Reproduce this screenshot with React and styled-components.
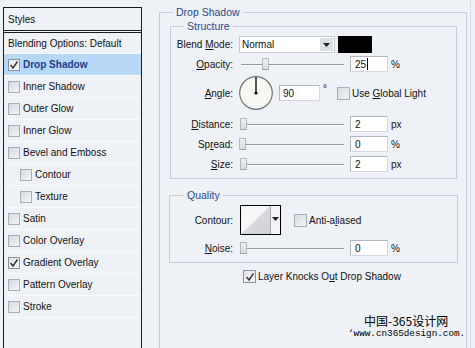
import React from 'react';
import styled, { createGlobalStyle } from 'styled-components';

const Global = createGlobalStyle`
  html, body { margin: 0; padding: 0; background: #eef1f5; }
  body { font-family: "Liberation Sans", Arial, sans-serif; font-size: 10px; color: #111; }
  u { text-decoration-thickness: 1px; text-underline-offset: 1px; }
`;

const Window = styled.div`
  position: relative;
  width: 475px;
  height: 348px;
  overflow: hidden;
  background: #eef1f5;
  display: flex;
  align-items: flex-start;
`;

/* ---------- left styles list ---------- */
const StylesPanel = styled.div`
  flex: none;
  margin: 7px 0 0 3px;
  width: 139px;
  height: 360px;
  box-sizing: border-box;
  border: 1px solid #1b1b1b;
  border-bottom: none;
  background: #eef2f6;
`;

const PanelHeader = styled.div`
  height: 22px;
  display: flex;
  align-items: center;
  padding-left: 4px;
  border-bottom: 3px double #1b1b1b;
`;

const BlendRow = styled.div`
  height: 20px;
  display: flex;
  align-items: center;
  padding-left: 4px;
  border-bottom: 1px solid #fafbfc;
`;

const StyleRow = styled.div`
  height: 21px;
  display: flex;
  align-items: center;
  padding-left: ${p => (p.$indent ? 16 : 4)}px;
  border-bottom: 1px solid #fafbfc;
  background: ${p => (p.$active ? '#b5d8f7' : 'transparent')};
  color: ${p => (p.$active ? '#1c3d8e' : '#111')};
  font-weight: ${p => (p.$active ? 700 : 400)};
`;

const RowText = styled.span`
  margin-left: 3px;
  white-space: nowrap;
`;

/* ---------- checkbox ---------- */
const Box = styled.span`
  flex: none;
  width: ${p => p.$size || 12}px;
  height: ${p => p.$size || 12}px;
  box-sizing: border-box;
  border: 1px solid ${p => (p.$checked ? '#8a9198' : '#a7adb3')};
  background: ${p =>
    p.$checked
      ? 'linear-gradient(135deg, #e4e7ea, #f7f8f9)'
      : 'linear-gradient(135deg, #d6dadf, #f3f5f7)'};
  display: inline-flex;
  align-items: center;
  justify-content: center;
`;

const Check = ({ checked, size }) => (
  <Box $checked={checked} $size={size}>
    {checked && (
      <svg width="10" height="10" viewBox="0 0 10 10">
        <polyline points="1.5,5 4,8 8.5,1.5" fill="none" stroke="#333" strokeWidth="1.4" />
      </svg>
    )}
  </Box>
);

/* ---------- right side groups ---------- */
const Outer = styled.fieldset`
  flex: none;
  margin: 6px 0 0 17px;
  padding: 0 9px 0 10px;
  width: 308px;
  height: 380px;
  box-sizing: border-box;
  border: 1px solid #c6ccd2;
  min-inline-size: 0;
`;

const Group = styled.fieldset`
  margin: ${p => p.$margin || '0'};
  padding: 0 0 ${p => p.$pb}px 0;
  border: 1px solid #c6ccd2;
  min-inline-size: 0;
`;

const Legend = styled.legend`
  margin-left: ${p => p.$ml}px;
  padding: 0 3px;
  font-size: 10.5px;
  line-height: 12px;
  color: #2a4b8d;
`;

const Row = styled.div`
  display: flex;
  align-items: center;
  height: ${p => p.$h}px;
  margin-top: ${p => p.$mt}px;
  margin-left: ${p => p.$ml || 0}px;
`;

const Label = styled.span`
  flex: none;
  width: ${p => p.$w || 62}px;
  margin-right: 6px;
  text-align: right;
  white-space: nowrap;
`;

const Select = styled.div`
  flex: none;
  width: 96px;
  height: 17px;
  box-sizing: border-box;
  border: 1px solid #c4c9ce;
  background: #fff;
  display: flex;
  align-items: center;
  padding-left: 2px;
`;

const SelectBtn = styled.span`
  margin-left: auto;
  width: 13px;
  height: 13px;
  margin-right: 1px;
  background: #dcdfe3;
  display: flex;
  align-items: center;
  justify-content: center;
`;

const Swatch = styled.div`
  flex: none;
  width: 34px;
  height: 17px;
  margin-left: 3px;
  background: #000;
`;

const Slider = styled.div`
  flex: none;
  position: relative;
  width: 104px;
  height: 14px;
  margin-left: 1px;
  &::before {
    content: '';
    position: absolute;
    left: 1px;
    right: 0;
    top: 7px;
    height: 1px;
    background: #8f959b;
    box-shadow: 0 1px 0 #fff;
  }
`;

const Thumb = styled.span`
  position: absolute;
  top: 1px;
  left: ${p => p.$pos}px;
  width: 7px;
  height: 12px;
  box-sizing: border-box;
  border: 1px solid #b4b9be;
  border-bottom-color: #9ea4aa;
  background: linear-gradient(#eef0f2, #dadde1);
`;

const Field = styled.div`
  flex: none;
  width: ${p => p.$w || 38}px;
  height: 16px;
  margin-left: ${p => p.$ml ?? 6}px;
  box-sizing: border-box;
  background: #fff;
  border: 1px solid #d3d7db;
  border-top-color: #b3b8bd;
  border-left-color: #b3b8bd;
  display: flex;
  align-items: center;
  padding-left: ${p => p.$pl ?? 4}px;
`;

const Caret = styled.span`
  display: inline-block;
  width: 1px;
  height: 12px;
  background: #000;
  margin-left: 1px;
`;

const Unit = styled.span`
  margin-left: 3px;
`;

const Degree = styled.span`
  flex: none;
  width: 17px;
  box-sizing: border-box;
  padding-left: 3px;
  align-self: flex-start;
  margin-top: 7px;
`;

const CheckText = styled.span`
  margin-left: 2px;
  white-space: nowrap;
`;

const ContourBox = styled.div`
  flex: none;
  margin-left: 1px;
  width: 41px;
  height: 30px;
  box-sizing: border-box;
  border: 1px solid #000;
  display: flex;
  background: #fff;
`;

const ContourDrop = styled.div`
  width: 10px;
  border-left: 1px solid #a8adb2;
  background: #f3f4f6;
  display: flex;
  justify-content: center;
  padding-top: 11px;
  box-sizing: border-box;
`;

const Edge = styled.div`
  flex: none;
  margin-left: 3px;
  width: 1px;
  height: 348px;
  background: #d8dce1;
`;

const Watermark = styled.div`
  position: absolute;
  left: 348px;
  top: 313px;
  color: #000;
`;

const WmCn = styled.div`
  padding-left: 16px;
  font-family: "Noto Sans CJK SC", sans-serif;
  font-size: 12px;
  line-height: 15px;
`;

const WmUrl = styled.div`
  font-family: "Liberation Mono", monospace;
  font-size: 9.3px;
  line-height: 11px;
  white-space: nowrap;
`;

const Arrow = () => (
  <svg width="7" height="4" viewBox="0 0 7 4">
    <polygon points="0,0 7,0 3.5,4" fill="#222" />
  </svg>
);

const Dial = () => (
  <svg width="34" height="34" viewBox="0 0 34 34" style={{ flex: 'none' }}>
    <circle cx="17" cy="17" r="16.3" fill="#f7f7f1" stroke="#6f757a" strokeWidth="1.2" />
    <line x1="17" y1="17" x2="17" y2="1" stroke="#000" strokeWidth="1.3" />
    <circle cx="17" cy="17" r="1.6" fill="#000" />
  </svg>
);

const styleItems = [
  { name: 'Drop Shadow', checked: true, active: true },
  { name: 'Inner Shadow' },
  { name: 'Outer Glow' },
  { name: 'Inner Glow' },
  { name: 'Bevel and Emboss' },
  { name: 'Contour', indent: true },
  { name: 'Texture', indent: true },
  { name: 'Satin' },
  { name: 'Color Overlay' },
  { name: 'Gradient Overlay', checked: true },
  { name: 'Pattern Overlay' },
  { name: 'Stroke' },
];

export default function App() {
  return (
    <Window>
      <Global />
      <StylesPanel>
        <PanelHeader>Styles</PanelHeader>
        <BlendRow>Blending Options: Default</BlendRow>
        {styleItems.map(it => (
          <StyleRow key={it.name} $indent={it.indent} $active={it.active}>
            <Check checked={it.checked} />
            <RowText>{it.name}</RowText>
          </StyleRow>
        ))}
      </StylesPanel>

      <Outer>
        <Legend $ml={3}>Drop Shadow</Legend>
        <Group $margin="2px 0 0 0" $pb={6}>
          <Legend $ml={13}>Structure</Legend>
          <Row $h={17} $mt={4}>
            <Label>Blend <u>M</u>ode:</Label>
            <Select>
              Normal
              <SelectBtn><Arrow /></SelectBtn>
            </Select>
            <Swatch />
          </Row>
          <Row $h={16} $mt={3}>
            <Label><u>O</u>pacity:</Label>
            <Slider><Thumb $pos={22} /></Slider>
            <Field>25<Caret /></Field>
            <Unit>%</Unit>
          </Row>
          <Row $h={34} $mt={4}>
            <Label><u>A</u>ngle:</Label>
            <Dial />
            <Field $w={41} $pl={3}>90</Field>
            <Degree>°</Degree>
            <Check size={13} />
            <CheckText>Use <u>G</u>lobal Light</CheckText>
          </Row>
          <Row $h={16} $mt={6}>
            <Label><u>D</u>istance:</Label>
            <Slider><Thumb $pos={0} /></Slider>
            <Field>2</Field>
            <Unit>px</Unit>
          </Row>
          <Row $h={16} $mt={4}>
            <Label>Sp<u>r</u>ead:</Label>
            <Slider><Thumb $pos={-1} /></Slider>
            <Field>0</Field>
            <Unit>%</Unit>
          </Row>
          <Row $h={16} $mt={4}>
            <Label><u>S</u>ize:</Label>
            <Slider><Thumb $pos={0} /></Slider>
            <Field>2</Field>
            <Unit>px</Unit>
          </Row>
        </Group>

        <Group $margin="10px -1px 0 -1px" $pb={6}>
          <Legend $ml={14}>Quality</Legend>
          <Row $h={30} $mt={4}>
            <Label $w={63}>Contour:</Label>
            <ContourBox>
              <svg width="29" height="28" viewBox="0 0 29 28" style={{ display: 'block' }}>
                <defs>
                  <linearGradient id="cg" x1="0" y1="0" x2="1" y2="1">
                    <stop offset="0" stopColor="#e2e3e6" />
                    <stop offset="1" stopColor="#cfd1d5" />
                  </linearGradient>
                </defs>
                <rect width="29" height="28" fill="#f6f7f8" />
                <polygon points="0,28 29,0 29,28" fill="url(#cg)" />
              </svg>
              <ContourDrop><Arrow /></ContourDrop>
            </ContourBox>
            <Row $h={13} $mt={0} $ml={13}>
              <Check size={13} />
              <CheckText>Anti-a<u>l</u>iased</CheckText>
            </Row>
          </Row>
          <Row $h={16} $mt={5}>
            <Label $w={63}><u>N</u>oise:</Label>
            <Slider><Thumb $pos={0} /></Slider>
            <Field>0</Field>
            <Unit>%</Unit>
          </Row>
        </Group>

        <Row $h={13} $mt={7} $ml={73}>
          <Check size={13} checked />
          <CheckText>Layer Knocks O<u>u</u>t Drop Shadow</CheckText>
        </Row>
      </Outer>
      <Edge />

      <Watermark>
        <WmCn>中国-365设计网</WmCn>
        <WmUrl>‘www.cn365design.com.</WmUrl>
      </Watermark>
    </Window>
  );
}
